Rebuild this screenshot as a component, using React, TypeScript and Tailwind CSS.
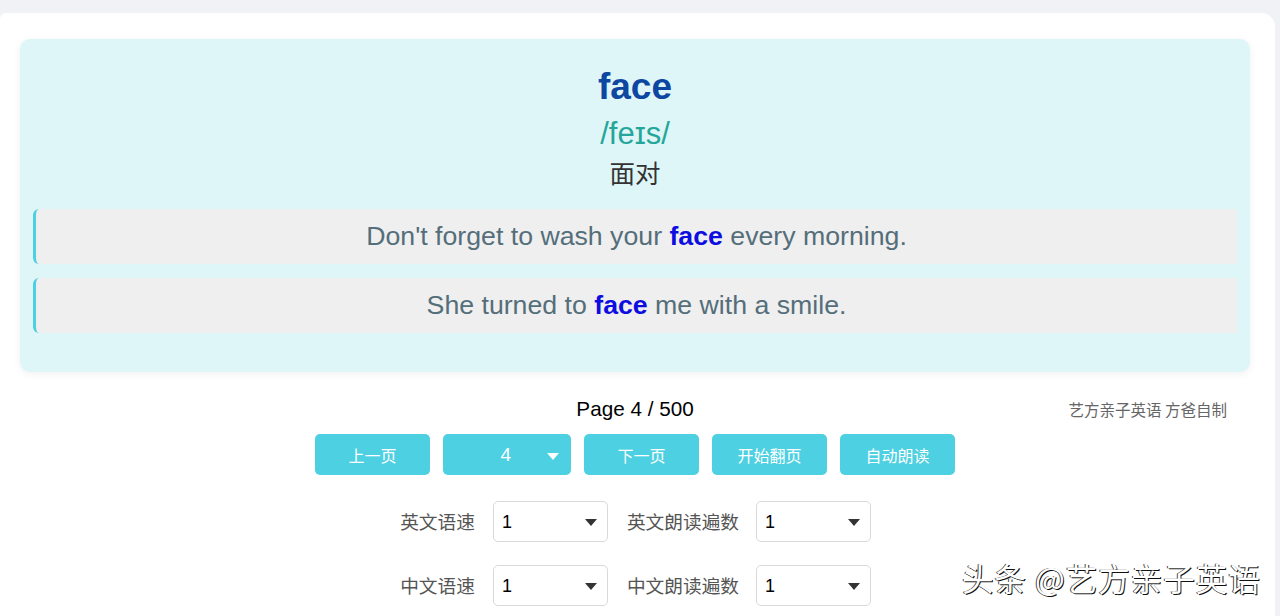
import React from 'react';

const caret = (
  <svg width="12" height="7" viewBox="0 0 12 7" className="fill-current">
    <path d="M0 0h12L6 7z" />
  </svg>
);

function Dropdown({ value }: { value: string }) {
  return (
    <div className="w-[115px] h-[41px] bg-white border border-[#d9d9d9] rounded-[5px] flex items-center justify-between pl-2 pr-[10px] text-[18px] text-black">
      <span className="mt-[2px]">{value}</span>
      <span className="text-[#333] mt-[2px]">{caret}</span>
    </div>
  );
}

export default function App() {
  const examples = [
    { before: "Don't forget to wash your ", word: 'face', after: ' every morning.' },
    { before: 'She turned to ', word: 'face', after: ' me with a smile.' },
  ];
  const buttons = ['上一页', 'select', '下一页', '开始翻页', '自动朗读'];
  const rows = [
    ['英文语速', '英文朗读遍数'],
    ['中文语速', '中文朗读遍数'],
  ];

  return (
    <div
      className="w-[1280px] h-[616px] overflow-hidden bg-[#f0f2f5] pt-[13px] pr-[5px]"
      style={{ fontFamily: '"Liberation Sans", Arial, "Noto Sans CJK SC", sans-serif' }}
    >
      <div className="relative bg-white rounded-tl-[6px] rounded-tr-[14px] h-[640px] pt-[26px] px-[20px]">
        <section className="w-[1230px] bg-[#dff6f9] rounded-[10px] shadow-[0_2px_8px_rgba(0,0,0,0.06)] pt-[24px] pb-[39px] px-[13px] flex flex-col items-center">
          <h1 className="text-[37px] leading-[48px] font-bold text-[#0d47a1]">face</h1>
          <div className="text-[31px] leading-[44px] text-[#26a69a] mt-[1px]">/feɪs/</div>
          <div className="text-[25.5px] leading-[36px] text-[#333]">面对</div>
          <div className="w-full flex flex-col gap-[14px] mt-[17px]">
            {examples.map((ex, i) => (
              <div
                key={i}
                className="h-[55px] bg-[#efefef] border-l-[3px] border-[#4dd0e1] rounded-l-[6px] flex items-center justify-center text-[26.7px] text-[#546e7a]"
              >
                <span>
                  {ex.before}
                  <b className="text-[#0d0de0]">{ex.word}</b>
                  {ex.after}
                </span>
              </div>
            ))}
          </div>
        </section>

        <div className="relative w-[1230px] flex flex-col items-center">
          <div className="mt-[23px] text-[20.7px] leading-[28px] text-black">Page 4 / 500</div>
          <div className="absolute right-[23px] top-[26px] text-[15.5px] text-[#666] whitespace-nowrap" style={{ fontFamily: '"Noto Sans CJK SC", sans-serif' }}>
            艺方亲子英语 方爸自制
          </div>
          <div className="flex gap-[13px] mt-[11px]" style={{ fontFamily: '"Noto Sans CJK SC", sans-serif' }}>
            {buttons.map((b) =>
              b === 'select' ? (
                <div key={b} className="w-[128px] h-[41px] bg-[#4dd0e1] rounded-[5px] flex items-center justify-end pr-[12px] text-white text-[19px]">
                  <span className="mr-[36px] mt-[2px]" style={{ fontFamily: '"Liberation Sans", Arial, sans-serif' }}>4</span>
                  <span className="mt-[3px]">{caret}</span>
                </div>
              ) : (
                <button key={b} className="w-[115px] h-[41px] bg-[#4dd0e1] rounded-[5px] text-white text-[16px]">
                  {b}
                </button>
              )
            )}
          </div>
          <div className="flex flex-col gap-[23px] mt-[26px]">
            {rows.map((r, i) => (
              <div key={i} className="flex items-center text-[18.7px] text-[#555]">
                <span className="w-[76px] text-right mr-[18px]" style={{ fontFamily: '"Noto Sans CJK SC", sans-serif' }}>{r[0]}</span>
                <Dropdown value="1" />
                <span className="ml-[19px] mr-[17px]" style={{ fontFamily: '"Noto Sans CJK SC", sans-serif' }}>{r[1]}</span>
                <Dropdown value="1" />
              </div>
            ))}
          </div>
          <div
            className="absolute left-[942px] top-[182px] text-[31.5px] text-white tracking-[1px] whitespace-nowrap"
            style={{ fontFamily: '"Noto Sans CJK SC", sans-serif', textShadow: '1px 1px 0 #111, -1px 0 0 #444' }}
          >
            头条 @艺方亲子英语
          </div>
        </div>
      </div>
    </div>
  );
}
